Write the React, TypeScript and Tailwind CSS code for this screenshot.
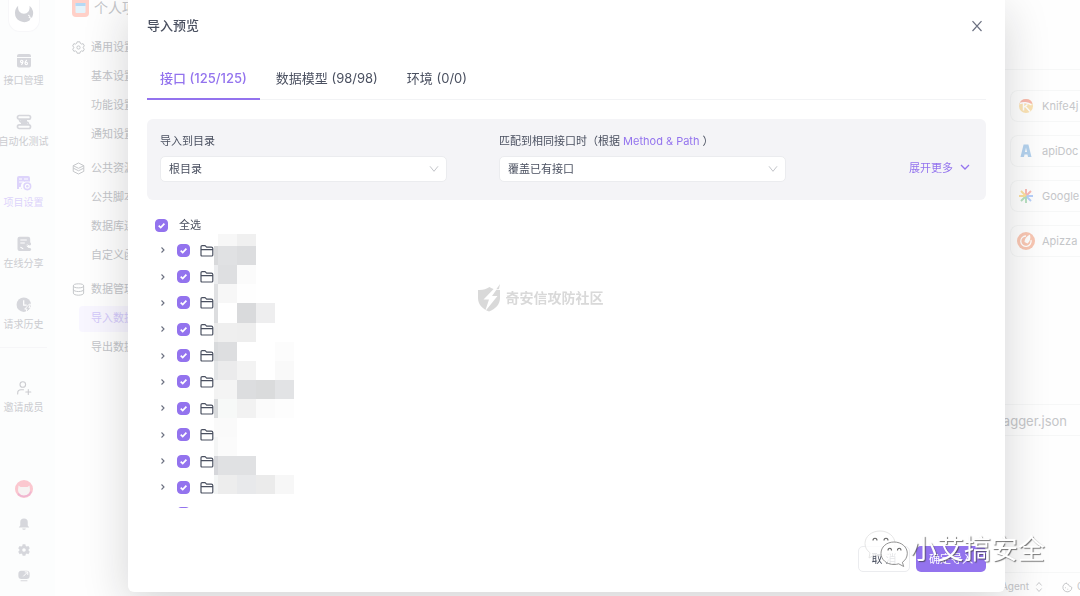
import type { ReactNode } from "react";

const Svg = ({ size = "size-4", box = "0 0 16 16", children }: { size?: string; box?: string; children: ReactNode }) => (
  <svg viewBox={box} className={`${size} shrink-0`} fill="none" aria-hidden="true">
    {children}
  </svg>
);

const ApiIcon = () => (
  <Svg>
    <path d="M3 1h10a2 2 0 0 1 2 2v1H1V3a2 2 0 0 1 2-2ZM1 5h14v7.500a2 2 0 0 1-2 2H3a2 2 0 0 1-2-2Z" fill="currentColor" />
    <g stroke="#fff" strokeWidth="1.100">
      <circle cx="5.700" cy="8.400" r="1.200" />
      <path d="M6.900 8.400c0 1.500-.5 2.600-1.700 3.400M10.800 7c-1.200.8-1.800 1.900-1.800 3.400" />
      <circle cx="10.300" cy="10.400" r="1.200" />
    </g>
  </Svg>
);
const TestIcon = () => (
  <Svg>
    <g stroke="currentColor" strokeWidth="1.700">
      <rect x="1.500" y="1.500" width="13" height="3.600" rx="1.700" />
      <rect x="1.500" y="10.900" width="13" height="3.600" rx="1.700" />
      <path d="M3.500 5.500c0 1.700.7 2.500 2.500 2.500h4.500c1.400 0 2 .8 2 2.500" />
    </g>
    <path d="M5 6h6v4H5z" fill="currentColor" />
  </Svg>
);
const SettingIcon = () => (
  <Svg>
    <path d="M3 1h9a2 2 0 0 1 2 2v3.500H9.500A4.500 4.500 0 0 0 6 14H5v-2H3v2H1V3a2 2 0 0 1 2-2Z" fill="currentColor" />
    <path d="M3 4h3M3 7h5M8 4h4" stroke="#fff" strokeWidth="1" />
    <circle cx="11.300" cy="11.300" r="3.300" stroke="currentColor" strokeWidth="1.600" />
    <circle cx="11.300" cy="11.300" r="1.200" fill="currentColor" />
  </Svg>
);
const ShareDocIcon = () => (
  <Svg>
    <path d="M3.500.8h8.700a2 2 0 0 1 2 2V7l-5 2.500L14 13v2H3.500a2 2 0 0 1-2-2V2.800a2 2 0 0 1 2-2Z" fill="currentColor" />
    <path d="M4.300 4h6.500M4.300 7h4.500M4.300 11.200c1.500 0 1.500 1.500 3 1.500" stroke="#fff" strokeWidth="1.100" />
    <path d="m13.300 8-4 2.500 4 2.700" stroke="currentColor" />
    <circle cx="13.700" cy="8" r="1.400" fill="currentColor" />
    <circle cx="9.200" cy="10.500" r="1.400" fill="currentColor" />
    <circle cx="13.700" cy="13.500" r="1.400" fill="currentColor" />
  </Svg>
);
const HistoryIcon = () => (
  <Svg>
    <circle cx="7.800" cy="7.700" r="7.200" fill="currentColor" />
    <path d="M7.700 3.300v4.900h3" stroke="#fff" strokeWidth="1.200" />
    <path d="m13.200 7.200-4.500 4.900H11L10 16l5.500-5.200h-2.600l1.600-3.600Z" fill="currentColor" stroke="#fff" strokeWidth="1" />
  </Svg>
);
const InviteIcon = () => (
  <Svg>
    <g stroke="currentColor" strokeWidth="1.100" strokeLinecap="round">
      <circle cx="6.800" cy="4.500" r="2.800" />
      <path d="M1.700 14v-1c0-2 1.300-3.200 3.300-3.200h2.500M12.300 9.500v5M9.800 12h5" />
    </g>
  </Svg>
);
const BellIcon = () => (
  <Svg size="size-3">
    <path d="M8 .5a5 5 0 0 1 5 5v4.500l2 2.500H1L3 10V5.500a5 5 0 0 1 5-5ZM5.500 14h5l-1 1.500h-3Z" fill="currentColor" />
  </Svg>
);
const GearIcon = () => (
  <Svg size="size-3">
    <path fillRule="evenodd" d="M6.200.3h3.600l.5 2.300 1.300.8 2.300-.7 1.800 3-1.600 1.700v1.400l1.600 1.600-1.800 3.100-2.300-.7-1.300.7-.5 2.300H6.200l-.5-2.300-1.300-.7-2.300.7-1.800-3.100 1.600-1.600V7.400L.3 5.700l1.800-3 2.300.7 1.300-.8ZM8 5.600a2.400 2.400 0 1 0 0 4.800 2.400 2.400 0 0 0 0-4.800Z" fill="currentColor" />
  </Svg>
);
const ScreenIcon = () => (
  <Svg size="size-3">
    <path d="M4 1h8a4 4 0 0 1 3.500 4v3a4 4 0 0 1-4 4h-7a4 4 0 0 1-4-4V5A4 4 0 0 1 4 1ZM3.500 13.500h9V15h-9Z" fill="currentColor" />
    <path d="m7 8.500 5.500-5.500M9 2.500h4v4" stroke="#fff" strokeWidth="1.300" />
  </Svg>
);

const HexIcon = () => (
  <Svg size="size-[13px]">
    <g stroke="currentColor" strokeWidth="1.200">
      <path d="M6.300 1h3.400l.6 2 1.400.8 2-.5 1.500 2.700L13.800 7.500v1l1.400 1.500-1.500 2.700-2-.5-1.400.8-.6 2H6.300l-.6-2-1.400-.8-2 .5L.8 10l1.400-1.500v-1L.8 6l1.500-2.700 2 .5 1.400-.8Z" strokeLinejoin="round" />
      <circle cx="8" cy="8" r="2" />
    </g>
  </Svg>
);
const LayersIcon = () => (
  <Svg size="size-[13px]">
    <path d="m8 1.200 6.500 3.300L8 7.800 1.500 4.500ZM1.500 4.500v3L8 10.800l6.500-3.300v-3M1.500 7.500v4L8 14.800l6.500-3.300v-4" stroke="currentColor" strokeWidth="1.200" strokeLinejoin="round" />
  </Svg>
);
const DatabaseIcon = () => (
  <Svg size="size-[13px]">
    <g stroke="currentColor" strokeWidth="1.200">
      <ellipse cx="8" cy="3.500" rx="6.300" ry="2.500" />
      <path d="M1.700 3.500v9c0 1.500 2.800 2.500 6.300 2.500s6.300-1 6.300-2.500v-9M1.700 8c0 1.500 2.800 2.500 6.300 2.500s6.300-1 6.300-2.500" />
    </g>
  </Svg>
);

const rail = [
  { label: "接口管理", icon: <ApiIcon /> },
  { label: "自动化测试", icon: <TestIcon /> },
  { label: "项目设置", icon: <SettingIcon />, active: true },
  { label: "在线分享", icon: <ShareDocIcon /> },
  { label: "请求历史", icon: <HistoryIcon /> },
];

const groups = [
  { title: "通用设置", icon: <HexIcon />, items: ["基本设置", "功能设置", "通知设置"] },
  { title: "公共资源", icon: <LayersIcon />, items: ["公共脚本", "数据库连接", "自定义函数"] },
  { title: "数据管理", icon: <DatabaseIcon />, items: ["导入数据", "导出数据"] },
];

function Rail() {
  return (
    <aside className="flex w-[55px] shrink-0 flex-col items-center bg-[#fcfdfd] pr-2 text-[#d6d7dc]">
      <div className="flex h-8 w-8 shrink-0 items-center justify-center rounded-b-xl border border-t-0 border-[#f7f7f9] bg-white pb-1">
        <Svg size="size-5" box="0 0 20 20">
          <path d="M4.200 1.700A9.300 9.300 0 0 0 1 8.800a9.200 9.200 0 0 0 14.500 7.600l1.300-2.600 1.300-.4A9.300 9.300 0 0 0 15.500 1.700c.6 4.500-1.200 8-5.500 8S3.500 6.200 4.200 1.700Z" fill="#d2d3d8" />
          <path d="m14 11 2 1.200-1 1.300 2 .5" stroke="#fff" />
        </Svg>
      </div>
      <ul className="mt-[21px] flex flex-col items-center gap-[27px]">
        {rail.map((r) => (
          <li key={r.label}>
            <a href="#" className={r.active ? "flex flex-col items-center gap-1 text-[#ddd4fb]" : "flex flex-col items-center gap-1"}>
              {r.icon}
              <span className={r.active ? "text-[10px] leading-[14px] whitespace-nowrap" : "text-[10px] leading-[14px] whitespace-nowrap text-[#cbccd0]"}>{r.label}</span>
            </a>
          </li>
        ))}
      </ul>
      <hr className="mt-4 w-full border-[#f6f6f8]" />
      <a href="#" className="mt-8 flex flex-col items-center gap-1 text-[#cbccd0]">
        <InviteIcon />
        <span className="text-[10px] leading-[14px] whitespace-nowrap">邀请成员</span>
      </a>
      <div className="mt-auto flex flex-col items-center gap-[14px] pb-[14px]">
        <Svg size="size-[18px] mb-1.5" box="0 0 18 18">
          <circle cx="9" cy="9" r="9" fill="#fbc7cf" />
          <path d="M3.500 5.500 5.500 7h7l2-1.500.5 4.500a6 5.500 0 0 1-12 0Z" fill="#f6f3f3" />
          <path d="M3 13.500a7.500 7.500 0 0 0 13-2" stroke="#eeb5d2" strokeWidth="1.500" />
        </Svg>
        <button aria-label="通知"><BellIcon /></button>
        <button aria-label="设置"><GearIcon /></button>
        <button aria-label="屏幕"><ScreenIcon /></button>
      </div>
    </aside>
  );
}

function SubNav() {
  return (
    <nav className="flex w-[190px] shrink-0 flex-col bg-[#fefefe] pl-[17px] text-[11px] text-[#c3c5c9]">
      <div className="flex h-4 items-center gap-[5px] text-sm">
        <Svg size="size-[17px]" box="0 0 17 17">
          <path d="M0 0h17v13a4 4 0 0 1-4 4H4a4 4 0 0 1-4-4Z" fill="#ffd0c8" />
          <rect x="3.500" y="3" width="10" height="10" rx="1" fill="#e4f3fb" />
          <path d="M3.500 3h10v3h-10z" fill="#b5d9f5" />
        </Svg>
        <span className="whitespace-nowrap">个人项目</span>
      </div>
      <div className="mt-[17px] flex flex-col gap-[5px]">
        {groups.map((g) => (
          <section key={g.title}>
            <h3 className="flex h-[29px] items-center gap-1.5">
              {g.icon}
              {g.title}
            </h3>
            <ul className="pl-[7px]">
              {g.items.map((i) => (
                <li key={i} className="flex h-[29px] items-center">
                  <a href="#" className={i === "导入数据" ? "flex h-[26px] w-full items-center rounded bg-[#f8f6ff] pl-3 text-[#d3c9fa]" : "flex h-[26px] w-full items-center pl-3"}>
                    {i}
                  </a>
                </li>
              ))}
            </ul>
          </section>
        ))}
      </div>
    </nav>
  );
}

const sources = [
  {
    name: "Knife4j",
    icon: (
      <Svg size="size-4">
        <circle cx="8" cy="8" r="7" fill="#fbe3b4" />
        <path d="M1.500 5.500a7 7 0 0 1 13 0Z" fill="#f9b9ae" />
        <path d="M2 5.500c3-1.500 8-1 11.500 1.500M5.500 5.500v7M5.500 9.500l4-3M7.500 8.500l4.500 5" stroke="#fff" strokeWidth="1.500" />
      </Svg>
    ),
  },
  {
    name: "apiDoc",
    icon: (
      <Svg size="size-4">
        <path fillRule="evenodd" d="M5.600 1.500h4.800L13.500 14H10l-.5-2.500h-3L6 14H2.500ZM8 4.500 7 9h2Z" fill="#b4d2ee" />
      </Svg>
    ),
  },
  {
    name: "Google",
    icon: (
      <Svg size="size-4">
        <g strokeWidth="1.900">
          <path d="M8 1v6M8 8l5-5" stroke="#f8b9b4" />
          <path d="M9 8h6M8 8l5 5" stroke="#b7d0fa" />
          <path d="M8 9v6M8 8l-5 5" stroke="#b5dfbf" />
          <path d="M1 8h6M8 8 3 3" stroke="#fbdf9e" />
        </g>
      </Svg>
    ),
  },
  {
    name: "Apizza",
    icon: (
      <Svg size="size-[18px]" box="0 0 18 18">
        <circle cx="9" cy="9" r="9" fill="#f9c7b3" />
        <path d="M9 4a5.200 5.200 0 1 0 5 4" stroke="#fff" strokeWidth="1.300" />
        <path d="M13 2.500C9.500 4 7.500 7 7.500 10l3 1.500c2.500-2 3.500-5 2.500-9Z" fill="#fff" />
      </Svg>
    ),
  },
];

function Background() {
  return (
    <div className="flex h-screen overflow-hidden">
      <Rail />
      <SubNav />
      <main className="flex min-w-0 flex-1 flex-col items-stretch bg-[#fefefe] text-[#c5c6c9]">
        <header className="h-[70px] shrink-0 border-b border-[#f6f7f7]" />
        <ul className="mt-5 flex w-[70px] flex-col gap-[13px] self-end">
          {sources.map((s) => (
            <li key={s.name} className="flex h-8 items-center gap-[7px] rounded-l-lg border border-r-0 border-[#f6f7f7] pl-1.5 text-[11px] whitespace-nowrap">
              <span className="flex w-[18px] justify-center">{s.icon}</span>
              {s.name}
            </li>
          ))}
        </ul>
        <p className="mt-[147px] flex h-8 items-center justify-end border-y border-[#f6f7f7] pt-1 pr-[13px] text-[13px]">swagger.json</p>
        <footer className="mt-auto flex h-6 items-center justify-end border-t border-[#f6f7f7] pt-1 text-[10px]">
          Agent
          <Svg size="ml-1 size-3">
            <path d="m4.500 6 3.500-4 3.500 4M4.500 10 8 14l3.500-4" stroke="currentColor" strokeWidth="1.300" />
          </Svg>
          <Svg size="ml-4 size-3">
            <path d="M7 3a3 3 0 0 0 3 1.500c0 1.500 1 2.500 2.500 2.500.5 1 1 1.500 2 1.500A6 6 0 1 1 4 4.500 6 6 0 0 1 7 3ZM6 9h.1M9 11h.1" stroke="currentColor" strokeWidth="1.300" strokeLinecap="round" strokeLinejoin="round" />
          </Svg>
          <span className="ml-1 w-[3px] overflow-hidden">C</span>
        </footer>
      </main>
    </div>
  );
}

function Check({ label, hidden }: { label: string; hidden?: boolean }) {
  return (
    <label className="flex items-center gap-[11px]">
      <span className="grid size-[13px] place-items-center">
        <input type="checkbox" aria-label={label} defaultChecked className="peer col-start-1 row-start-1 size-[13px] appearance-none rounded-[4px] border border-[#9373ee] checked:bg-[#9373ee]" />
        <svg viewBox="0 0 13 13" className="pointer-events-none col-start-1 row-start-1 size-[13px] opacity-0 peer-checked:opacity-100" fill="none" aria-hidden="true">
          <path d="m3.700 6.700 2 1.900 3.700-4" stroke="#fff" strokeWidth="1.700" />
        </svg>
      </span>
      {!hidden && <span>{label}</span>}
    </label>
  );
}

const Folder = () => (
  <svg viewBox="0 0 14 13" className="h-[13px] w-3.5" fill="none" stroke="#4a5060" strokeWidth="1.200" strokeLinejoin="round" aria-hidden="true">
    <path d="M1 11V2.700c0-.7.4-1.100 1.200-1.100h2.900l1.500 1.600h4.700c.9 0 1.500.5 1.500 1.300V11c0 .7-.4 1-1 1H2c-.7 0-1-.4-1-1ZM1 5.600h11.800" />
  </svg>
);

/* Pixelated blocks that hide the folder names: [row, column, colour] */
const colX = [0, 4, 23, 42, 61, 80];
const mosaic: [number, number, string][] = [
  [0, 1, "#f7f7f7"], [0, 2, "#f0f0f0"],
  [1, 0, "#d8d9db"], [1, 1, "#e0e1e3"], [1, 2, "#dcdddf"],
  [2, 0, "#ebecee"], [2, 1, "#dedfe1"], [2, 2, "#fbfbfb"],
  [3, 0, "#e0e1e3"], [3, 1, "#f7f7f7"], [3, 2, "#fefefe"],
  [4, 0, "#dcdddf"], [4, 1, "#ffffff"], [4, 2, "#d9dadc"], [4, 3, "#eeeeef"],
  [5, 0, "#ebebeb"], [5, 1, "#efefef"], [5, 2, "#eeeeee"],
  [6, 0, "#d8dadc"], [6, 1, "#dddee0"], [6, 4, "#fcfcfc"],
  [7, 0, "#e3e5e7"], [7, 1, "#ebebec"], [7, 2, "#f3f3f3"], [7, 4, "#f9f9f9"],
  [8, 0, "#f3f3f3"], [8, 1, "#f4f4f4"], [8, 2, "#dcdddf"], [8, 3, "#dadbdc"], [8, 4, "#e2e3e5"],
  [9, 0, "#d9dbdd"], [9, 1, "#f7f9f8"], [9, 2, "#f2f2f2"], [9, 3, "#fbfbfb"], [9, 4, "#fdfdfd"],
  [10, 0, "#fafafa"], [10, 1, "#fafafa"],
  [11, 0, "#f4f5f5"], [11, 1, "#fbfbfb"],
  [12, 0, "#d5d6da"], [12, 1, "#e0e1e3"], [12, 2, "#e0e1e3"],
  [13, 0, "#f3f5f5"], [13, 1, "#ededed"], [13, 2, "#e8e9eb"], [13, 3, "#ebebeb"], [13, 4, "#f7f7f7"],
];
const rowY = [0, 12, 31, 50, 69, 89, 108, 127, 146, 165, 184, 203, 222, 241, 260];

const Mosaic = () => (
  <svg viewBox="0 0 80 260" className="absolute -top-[3px] left-[67px] h-[260px] w-20" shapeRendering="crispEdges" aria-hidden="true">
    {mosaic.map(([r, c, fill]) => (
      <rect key={`${r}-${c}`} x={colX[c]} y={rowY[r]} width={colX[c + 1] - colX[c]} height={rowY[r + 1] - rowY[r]} fill={fill} />
    ))}
  </svg>
);

function Select({ id, label, value }: { id: string; label: ReactNode; value: string }) {
  return (
    <div className="min-w-0 flex-1">
      <label htmlFor={id} className="block h-4 leading-4 whitespace-nowrap">{label}</label>
      <div className="mt-[7px] grid items-center">
        <select id={id} className="col-start-1 row-start-1 h-[26px] w-full appearance-none rounded-[5px] border border-[#ebecef] bg-white pl-2">
          <option>{value}</option>
        </select>
        <svg viewBox="0 0 10 10" className="pointer-events-none col-start-1 row-start-1 mr-2 size-2.5 justify-self-end" fill="none" stroke="#c3c5ca" aria-hidden="true">
          <path d="m1 2.300 4 5 4-5" />
        </svg>
      </div>
    </div>
  );
}

function ImportDialog() {
  return (
    <div role="dialog" aria-labelledby="dialog-title" className="flex flex-1 flex-col rounded-b-md bg-white px-[19px] pb-5 text-[#4a5060] shadow-[0_12px_46px_rgba(20,24,28,0.18)]">
      <header className="flex h-[52px] items-center justify-between">
        <h2 id="dialog-title" className="text-[13px] font-medium">导入预览</h2>
        <button aria-label="关闭" className="mr-[3px]">
          <svg viewBox="0 0 12 12" className="size-3" fill="none" stroke="#6b7080" strokeWidth="1.200" aria-hidden="true">
            <path d="m1.500 1.200 9 9.800M10.500 1.200l-9 9.800" />
          </svg>
        </button>
      </header>

      <div role="tablist" className="flex h-12 items-stretch gap-[3px] text-[13px] shadow-[inset_0_-1px_0_#f2f3f5]">
        <button role="tab" aria-selected="true" className="border-b-2 border-[#9373ee] px-[13px] pt-2 font-medium text-[#9373ee]">接口 (125/125)</button>
        <button role="tab" aria-selected="false" className="border-b-2 border-transparent px-[13px] pt-2">数据模型 (98/98)</button>
        <button role="tab" aria-selected="false" className="border-b-2 border-transparent px-[13px] pt-2">环境 (0/0)</button>
      </div>

      <div className="mt-[19px] flex gap-[52px] rounded-md bg-[#f4f4f7] pt-3.5 pr-4 pb-[18px] pl-[13px]">
        <Select id="target" label="导入到目录" value="根目录" />
        <Select
          id="match"
          label={<>匹配到相同接口时（根据 <span className="text-[#9373ee]">Method &amp; Path</span> ）</>}
          value="覆盖已有接口"
        />
        <div className="flex w-[132px] items-end justify-end pb-1.5">
          <button className="flex items-center gap-[7px] text-[#9373ee]">
            展开更多
            <svg viewBox="0 0 10 10" className="size-2.5" fill="none" stroke="currentColor" strokeWidth="1.300" aria-hidden="true">
              <path d="m1 2 4 4 4-4" />
            </svg>
          </button>
        </div>
      </div>

      <div className="mt-[13px] flex h-6 items-center pl-2">
        <Check label="全选" />
      </div>
      <div className="relative">
        <div className="h-[271px] overflow-hidden">
          <ul className="grid h-[290px] auto-rows-fr">
            {Array.from({ length: 11 }, (_, i) => (
              <li key={i} className="flex items-center pl-3">
                <button aria-label="展开" className="mr-[11px]">
                  <svg viewBox="0 0 7 8" className="h-2 w-[7px]" fill="none" stroke="#6b7080" strokeWidth="1.100" aria-hidden="true">
                    <path d="m2.500 1.500 2.500 2.500-2.500 2.500" />
                  </svg>
                </button>
                <Check label={`目录 ${i + 1}`} hidden />
                <span className="ml-[10px]"><Folder /></span>
              </li>
            ))}
          </ul>
        </div>
        <Mosaic />
      </div>

      <footer className="mt-auto flex justify-end gap-1.5">
        <button className="h-[26px] w-[52px] rounded-[5px] border border-[#ebecef] bg-white">取 消</button>
        <button className="h-[26px] rounded-[5px] bg-[#9373ee] px-[13px] text-white">确定导入</button>
      </footer>
    </div>
  );
}

function Watermarks() {
  return (
    <div className="pointer-events-none fixed inset-0 flex items-center justify-center">
      <div className="flex items-center gap-[3px] text-sm font-bold text-[#d9d9d9]">
        <svg viewBox="0 0 26 28" className="h-7 w-[26px]" fill="#d9d9d9" aria-hidden="true">
          <path d="M1 6c5 .3 8-.8 11.500-3 2.500 1.700 6.500 3 10.500 3v8c0 6.500-4.500 11-11 13.500C5.500 25 1 20.500 1 14Z" />
          <path d="M20.500 1 6.500 15.500H12L8 27.500 20.500 12H15L23.500 0Z" fill="#fff" />
          <path d="M22.500 0 8.500 14.500h5.500L10 24l8.500-11H13Z" fill="#d9d9d9" opacity="0" />
          <path d="m19.500 5 3.500-5-1 5Z" />
        </svg>
        奇安信攻防社区
      </div>
      <div className="absolute right-[35px] bottom-[26px] flex items-center gap-0.5 text-[27px] leading-10 text-white [text-shadow:1px_1px_1px_rgba(60,60,60,0.7)]">
        <svg viewBox="0 0 44 38" className="mb-0.5 h-[38px] w-11" aria-hidden="true">
          <path d="M16 1C7.500 1 1 6.500 1 13.500c0 4 2 7 5 9.300L5 28l5.500-3c1.800.5 3.500.8 5.500.8 8.500 0 15-5.500 15-12.300S24.500 1 16 1Z" fill="#fff" fillOpacity=".8" stroke="#dedede" strokeWidth=".8" />
          <path d="M30 12c-7.500 0-13 5-13 11.300S22.500 34.500 30 34.500c1.700 0 3.300-.3 4.700-.7l5 2.700-1.300-4.200c3-2 4.900-5.300 4.900-9C43.300 17 37.500 12 30 12Z" fill="#fff" fillOpacity=".85" stroke="#777" strokeWidth=".8" />
          <g fill="none" stroke="#666" strokeWidth="1.100">
            <path d="M9 10.500c0-3 4-3 4 0M20 10.500c0-3 4-3 4 0M24 20.500c0-3 3.500-3 3.500 0M33.500 20.500c0-3 3.500-3 3.500 0" />
          </g>
        </svg>
        小艾搞安全
      </div>
    </div>
  );
}

export default function App() {
  return (
    <div lang="zh-CN" className="font-[Inter,'Noto_Sans_CJK_SC',sans-serif] text-[11px]">
      <Background />
      <div className="fixed inset-0 flex pr-[75px] pb-1 pl-32">
        <ImportDialog />
      </div>
      <Watermarks />
    </div>
  );
}
